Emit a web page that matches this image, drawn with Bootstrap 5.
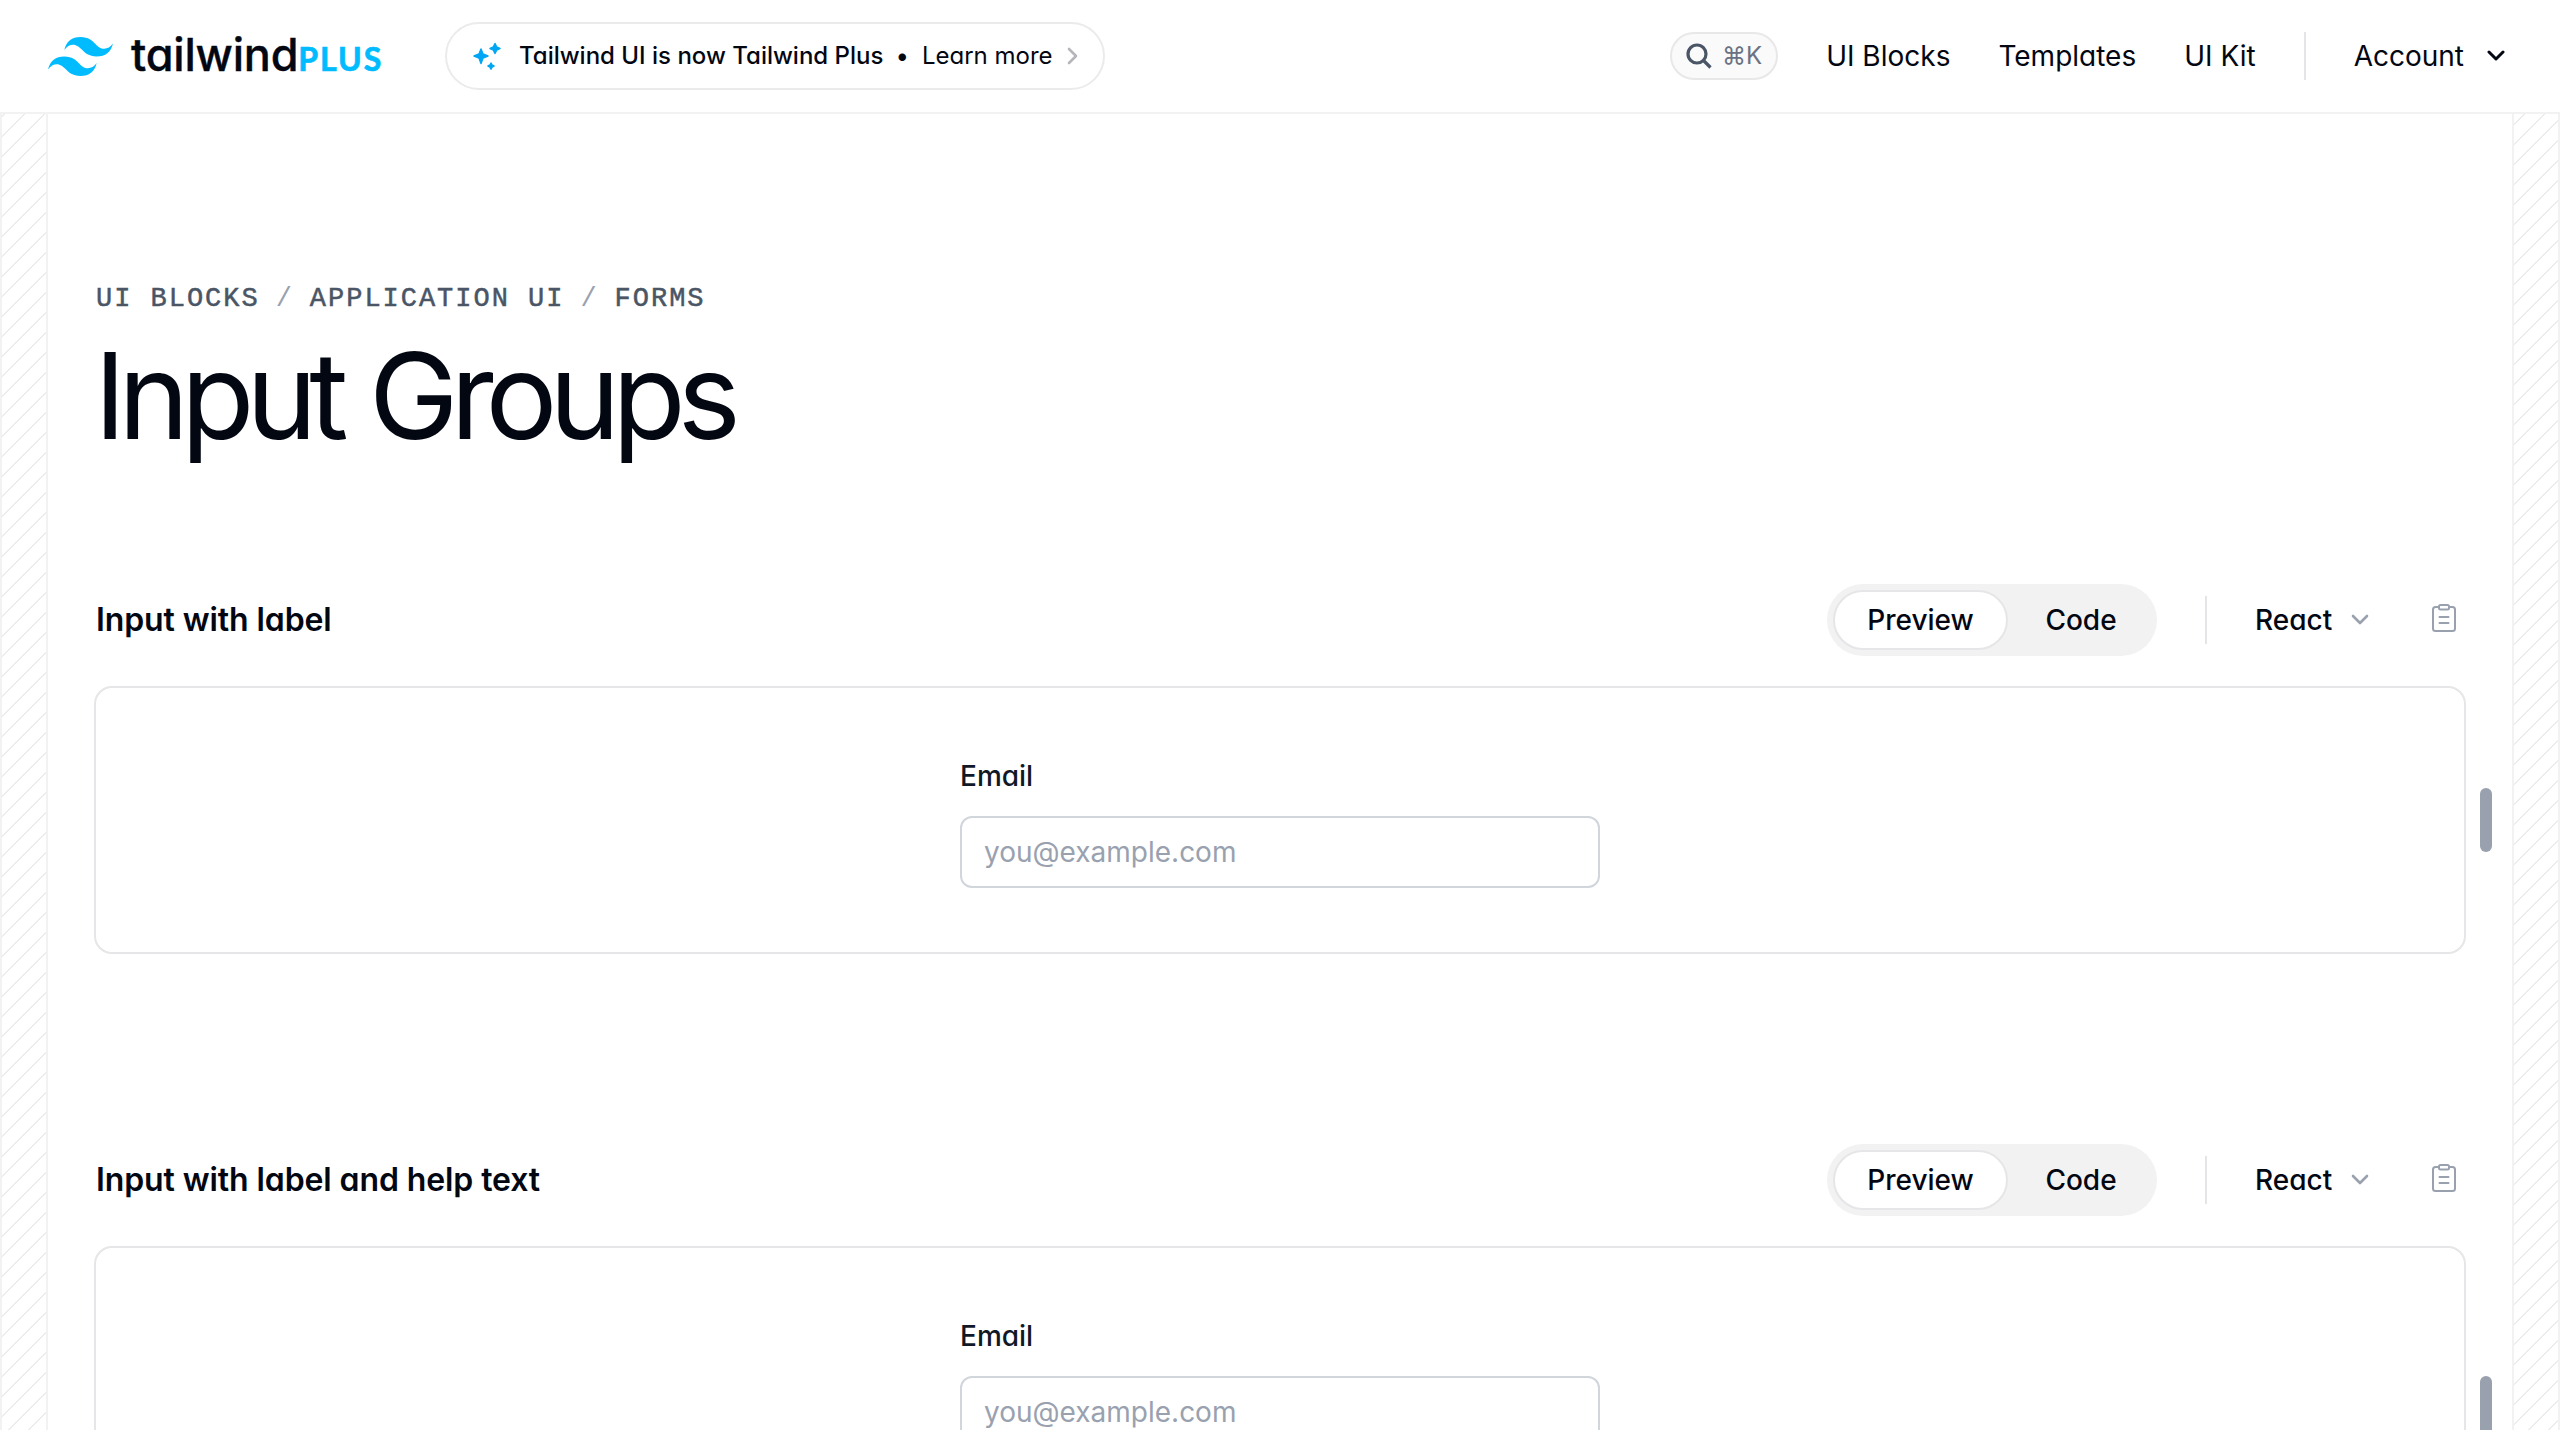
<!DOCTYPE html>
<html lang="en">
<head>
<meta charset="utf-8">
<title>Input Groups - Tailwind Plus</title>
<link href="https://cdn.jsdelivr.net/npm/bootstrap@5.3.0/dist/css/bootstrap.min.css" rel="stylesheet">
<style>
:root { --ink:#030712; --hatch:rgba(3,7,18,.075); }
html, body { height:1430px; overflow:hidden; }
body { font-family:Inter,"Liberation Sans",sans-serif; font-feature-settings:"cv11"; color:var(--ink); background:#fff; font-size:28px; line-height:48px; }
svg { display:block; flex:none; }
.site-bar { height:114px; border-bottom:2px solid #f2f2f3; padding:0 49px 0 48px; }
.brand { color:var(--ink); text-decoration:none; width:340px; }
.brand-words { line-height:1; margin:0 0 3px 18px; white-space:nowrap; }
.brand-name { font-size:45px; font-weight:500; letter-spacing:-.2px; -webkit-text-stroke:.4px; }
.brand-plus { font-family:Lato,sans-serif; font-size:32px; font-weight:700; color:#00bcff; letter-spacing:2px; margin-left:0; -webkit-text-stroke:.7px; }
.promo { width:660px; height:68px; border:2px solid #ebebec; margin-left:57px; padding:0 25px; font-size:24px; color:var(--ink); text-decoration:none; white-space:nowrap; }
.promo-main { font-weight:500; margin-left:17px; }
.promo-dot { margin:0 13px 0 12px; }
.promo svg:last-child { margin-left:14px; }
.top-nav { gap:48px; }
.search-pill { width:108px; height:48px; border:2px solid #e8e8e9; background:#fafafa; padding:0 14px; color:#6a7282; font-size:24px; }
.top-link { color:var(--ink); text-decoration:none; white-space:nowrap; }
.top-link svg { margin:0 6px 0 23px; }
.v-rule { width:2px; height:48px; background:#e5e5e7; flex:none; }
.gutter { width:48px; flex:none; background:repeating-linear-gradient(315deg,var(--hatch) 0,var(--hatch) 2px,transparent 0,transparent 50%) 0 0/20px 20px fixed; border-left:2px solid #f2f2f3; border-right:2px solid #f2f2f3; }
.page { height:1316px; overflow:hidden; }
.content { padding:161px 46px 0 46px; min-width:0; }
.crumbs { font-family:"Liberation Mono",monospace; font-size:27px; letter-spacing:1.98px; color:#4a5565; line-height:48px; -webkit-text-stroke:.5px; margin-left:2px; }
.crumbs i { font-style:normal; color:#99a1af; -webkit-text-stroke:0; margin:0 16px; }
.page-title { font-size:120px; font-weight:400; letter-spacing:-8.1px; word-spacing:3px; line-height:120px; margin:13px 0 128px 0; }
.block-title { font-size:32px; font-weight:600; letter-spacing:-.1px; margin:1px 0 0 2px; }
.block-head { height:72px; padding-right:9px; }
.toggle { background:#f2f2f3; width:330px; height:72px; padding:6px 3px 6px 6px; font-weight:500; }
.toggle .on { width:175px; height:60px; background:#fff; border:2px solid #e6e6e8; }
.block-head .v-rule { margin:0 48px 0 48px; }
.lang { font-weight:500; width:176px; gap:19px; }
.clip { margin-bottom:4px; }
.frame-wrap { position:relative; margin-top:30px; }
.frame { border:2px solid #e6e6e8; border-radius:18px; height:268px; padding-top:64px; }
.frame.tall { height:324px; }
.field { width:640px; }
.field .form-label { font-weight:500; color:#101828; margin:0 0 16px; display:block; line-height:48px; }
.field .form-control { height:72px; border:2px solid #d1d5dc; border-radius:12px; font-size:28px; padding:0 22px; }
.field .form-control::placeholder { color:#99a1af; opacity:1; }
.handle { position:absolute; right:-26px; top:50%; width:12px; height:64px; margin-top:-32px; background:#99a1af; border-radius:6px; }
.block + .block { margin-top:190px; }
</style>
</head>
<body>
<header class="site-bar d-flex align-items-center">
  <a class="brand d-flex align-items-center" href="#">
    <svg width="65" height="39" viewBox="0 0 54 32.4" fill="#00bcff"><path d="M27 0c-7.2 0-11.7 3.6-13.5 10.8 2.7-3.6 5.85-4.95 9.45-4.05 2.054.513 3.522 2.004 5.147 3.653C30.744 13.09 33.808 16.2 40.5 16.2c7.2 0 11.7-3.6 13.5-10.8-2.7 3.6-5.85 4.95-9.45 4.05-2.054-.513-3.522-2.004-5.147-3.653C36.756 3.11 33.692 0 27 0zM13.5 16.2C6.3 16.2 1.8 19.8 0 27c2.7-3.6 5.85-4.95 9.45-4.05 2.054.514 3.522 2.004 5.147 3.653C17.244 29.29 20.308 32.4 27 32.4c7.2 0 11.7-3.6 13.5-10.8-2.7 3.6-5.85 4.95-9.45 4.05-2.054-.513-3.522-2.004-5.147-3.653C23.256 19.31 20.192 16.2 13.5 16.2z"/></svg>
    <span class="brand-words d-flex align-items-baseline"><span class="brand-name">tailwind</span><span class="brand-plus">PLUS</span></span>
  </a>
  <a class="promo rounded-pill d-flex align-items-center" href="#">
    <svg width="30" height="30" viewBox="0 0 30 30" fill="#00a6f4" stroke="#00a6f4" stroke-width="1.500" stroke-linejoin="round"><path d="M9 8l2 5 5 2-5 2-2 5.500L7 17l-5-2 5-2zM23 2.500l1.600 3.400L28 7.500l-3.400 1.600L23 12.500l-1.600-3.400L18 7.500l3.400-1.600zM19 22l1 2 2 1-2 1.200-1 2-1-2-2-1.200 2-1z"/></svg>
    <span class="promo-main">Tailwind UI is now Tailwind Plus</span>
    <span class="promo-dot">•</span>
    <span>Learn more</span>
    <svg width="12" height="20" viewBox="0 0 12 20" fill="none" stroke="#b5b6ba" stroke-width="2.600" stroke-linecap="round" stroke-linejoin="round"><path d="M2 3l7 7-7 7"/></svg>
  </a>
  <nav class="top-nav d-flex align-items-center ms-auto">
    <div class="search-pill rounded-pill d-flex align-items-center justify-content-between">
      <svg width="26" height="26" viewBox="0 0 26 26" fill="none" stroke="#4a5565" stroke-width="3.200"><circle cx="11" cy="11" r="9"/><path d="M17.500 17.500l7 7"/></svg>
      <span>⌘K</span>
    </div>
    <a class="top-link" href="#">UI Blocks</a>
    <a class="top-link" href="#">Templates</a>
    <a class="top-link" href="#">UI Kit</a>
    <span class="v-rule"></span>
    <a class="top-link d-flex align-items-center" href="#">Account
      <svg width="18" height="12" viewBox="0 0 18 12" fill="none" stroke="#030712" stroke-width="3" stroke-linecap="round" stroke-linejoin="round"><path d="M2 2l7 7 7-7"/></svg>
    </a>
  </nav>
</header>
<div class="page d-flex">
  <div class="gutter"></div>
  <main class="content flex-grow-1">
    <div class="crumbs">UI BLOCKS<i>/</i>APPLICATION UI<i>/</i>FORMS</div>
    <h1 class="page-title">Input Groups</h1>
    <section class="block">
      <div class="block-head d-flex align-items-center">
        <h2 class="block-title">Input with label</h2>
        <div class="toggle rounded-pill d-flex align-items-center ms-auto"><span class="on rounded-pill d-flex align-items-center justify-content-center">Preview</span><span class="flex-grow-1 text-center">Code</span></div>
        <span class="v-rule"></span>
        <div class="lang d-flex align-items-center">React
          <svg width="18" height="12" viewBox="0 0 18 12" fill="none" stroke="#99a1af" stroke-width="2.600" stroke-linecap="round" stroke-linejoin="round"><path d="M2 2l7 7 7-7"/></svg>
        </div>
        <svg class="clip" width="26" height="30" viewBox="0 0 26 30" fill="none" stroke="#99a1af" stroke-width="2" stroke-linejoin="round" stroke-linecap="round"><path d="M7 4H4.500A2.500 2.500 0 0 0 2 6.500v19A2.500 2.500 0 0 0 4.500 28h17a2.500 2.500 0 0 0 2.500-2.500v-19A2.500 2.500 0 0 0 21.500 4H19M8.500 14h9M8.500 20h9"/><rect x="8" y="2" width="10" height="4.500" rx="1.500"/></svg>
      </div>
      <div class="frame-wrap">
        <div class="frame"><div class="field mx-auto"><label class="form-label" for="email1">Email</label><input class="form-control" id="email1" placeholder="you@example.com"></div></div>
        <span class="handle"></span>
      </div>
    </section>
    <section class="block">
      <div class="block-head d-flex align-items-center">
        <h2 class="block-title">Input with label and help text</h2>
        <div class="toggle rounded-pill d-flex align-items-center ms-auto"><span class="on rounded-pill d-flex align-items-center justify-content-center">Preview</span><span class="flex-grow-1 text-center">Code</span></div>
        <span class="v-rule"></span>
        <div class="lang d-flex align-items-center">React
          <svg width="18" height="12" viewBox="0 0 18 12" fill="none" stroke="#99a1af" stroke-width="2.600" stroke-linecap="round" stroke-linejoin="round"><path d="M2 2l7 7 7-7"/></svg>
        </div>
        <svg class="clip" width="26" height="30" viewBox="0 0 26 30" fill="none" stroke="#99a1af" stroke-width="2" stroke-linejoin="round" stroke-linecap="round"><path d="M7 4H4.500A2.500 2.500 0 0 0 2 6.500v19A2.500 2.500 0 0 0 4.500 28h17a2.500 2.500 0 0 0 2.500-2.500v-19A2.500 2.500 0 0 0 21.500 4H19M8.500 14h9M8.500 20h9"/><rect x="8" y="2" width="10" height="4.500" rx="1.500"/></svg>
      </div>
      <div class="frame-wrap">
        <div class="frame tall"><div class="field mx-auto"><label class="form-label" for="email2">Email</label><input class="form-control" id="email2" placeholder="you@example.com"></div></div>
        <span class="handle"></span>
      </div>
    </section>
  </main>
  <div class="gutter"></div>
</div>
<script src="https://cdn.jsdelivr.net/npm/bootstrap@5.3.0/dist/js/bootstrap.bundle.min.js"></script>
</body>
</html>
